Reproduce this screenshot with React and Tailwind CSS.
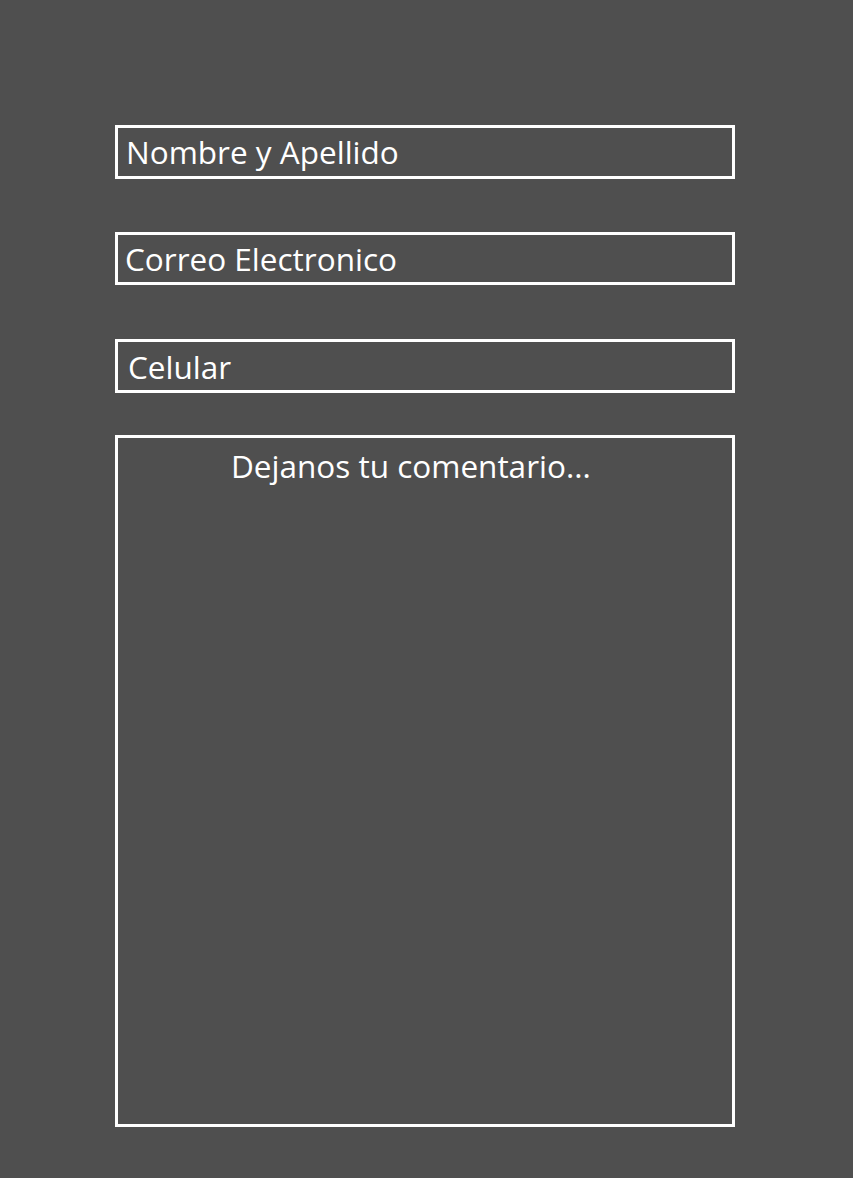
export default function App() {
  const field =
    "block w-full border-[3px] border-white bg-transparent text-white placeholder:text-white outline-none text-[31.5px] leading-none";

  return (
    <div className="min-h-[1178px] w-full bg-[#4f4f4f]" style={{ fontFamily: '"Open Sans", sans-serif' }}>
      <form className="ml-[115px] w-[620px] pt-[125px] flex flex-col">
        <input type="text" placeholder="Nombre y Apellido" className={`${field} h-[54px] pl-[8px] pb-[2px]`} />
        <input type="email" placeholder="Correo Electronico" className={`${field} h-[53px] mt-[53px] pl-[7px]`} />
        <input type="tel" placeholder="Celular" className={`${field} h-[54px] mt-[54px] pl-[10px]`} />
        <textarea
          placeholder="Dejanos tu comentario..."
          className="block w-full h-[692px] mt-[42px] border-[3px] border-white bg-transparent text-white placeholder:text-white outline-none resize-none pt-[8px] pl-[113px] text-[31.5px] leading-[1.3]"
        />
      </form>
    </div>
  );
}
